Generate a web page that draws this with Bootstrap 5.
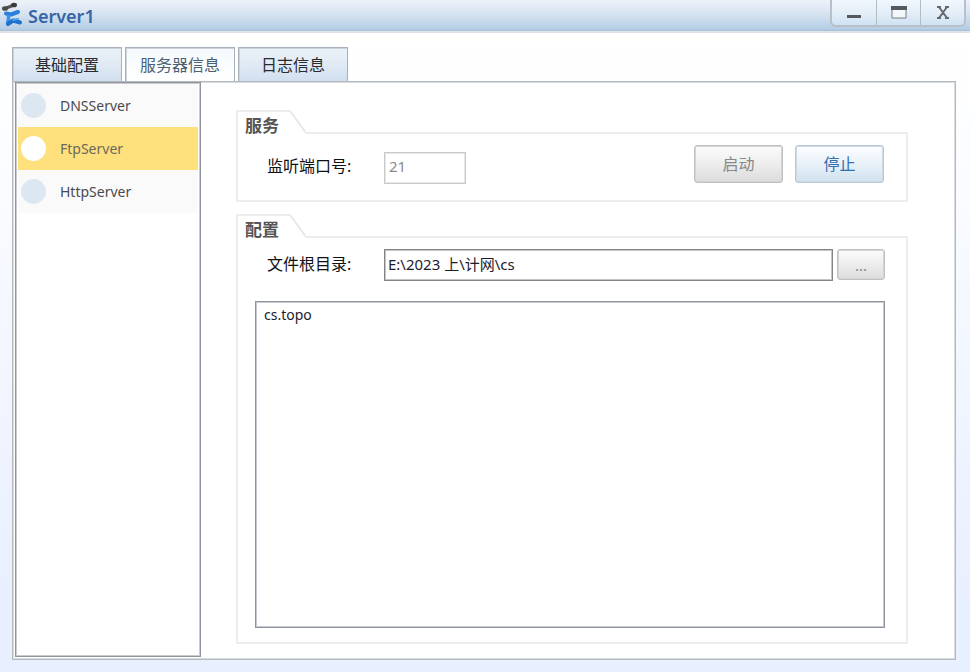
<!DOCTYPE html>
<html lang="zh-CN">
<head>
<meta charset="utf-8">
<meta name="viewport" content="width=device-width, initial-scale=1">
<title>Server1</title>
<link href="https://cdn.jsdelivr.net/npm/bootstrap@5.3.0/dist/css/bootstrap.min.css" rel="stylesheet">
<style>
  body {
    font-family: "Noto Sans", "Noto Sans CJK SC", sans-serif;
    font-size: 16px;
    line-height: 20px;
    color: #111;
    background: linear-gradient(#fff 32px, #fdfeff 110px, #f3f7ff 340px, #e8effe 600px);
  }
  .title-bar {
    height: 33px;
    background: linear-gradient(#eef3fa, #d3e1ef 50%, #b5cee5 29px, #a5bfd7);
    border-bottom: 2px solid #dfe4ea;
  }
  .title-text {
    padding-top: 5px;
    font-size: 18px;
    line-height: 22px;
    font-weight: 600;
    color: #3565a8;
  }
  .window-buttons {
    height: 27px;
    border: 2px solid #b8c0c7;
    border-top: 0;
    border-radius: 0 0 6px 6px;
    background: linear-gradient(#f1f7fd, #e4eef8 50%, #cfe2f3);
  }
  .window-buttons button {
    width: 44px;
    border: 0;
    background: none;
  }
  .window-buttons button + button { border-left: 1px solid #b4bcc3; }
  .page-body { padding: 14px 14px 12px 12px; }
  .tab-row { gap: 3px; }
  .tab-button {
    width: 110px;
    height: 34px;
    border: 1px solid #a9b2bb;
    border-bottom: 0;
    box-shadow: inset 1px 1px #ccd3da;
    color: #282c30;
    background: linear-gradient(#eaf1f8, #e1eaf4 50%, #d0dff0);
  }
  .tab-button.active {
    color: #4a6072;
    background: linear-gradient(#f5fafe, #fff);
  }
  .panel {
    border: 1px solid #b4b9bd;
    box-shadow: inset 0 0 0 1px #d9dcde;
    padding: 0 1px 1px;
  }
  .server-list {
    width: 186px;
    margin: 0 0 1px 1px;
    padding: 1px;
    border: 1px solid #8f949f;
    box-shadow: inset 0 0 0 1px #c9cbd1;
  }
  .server-list button {
    height: 43px;
    margin: 0 1px;
    padding: 0 0 0 3px;
    gap: 14px;
    border: 0;
    font-size: 14px;
    color: #4a4a50;
    background: #fafafa;
  }
  .server-list button.active { background: #fee07d; color: #6a6a5c; }
  .dot {
    width: 25px;
    height: 25px;
    background: #dde7f2;
  }
  .active .dot { background: #fff; }
  .content-area { padding: 28px 46px 14px 35px; }
  .config-section { margin-top: 12px; }
  .group-title {
    width: 54px;
    height: 24px;
    padding: 5px 0 0 7px;
    border: solid #ececec;
    border-width: 2px 0 0 2px;
    font-size: 17px;
    line-height: 18px;
    font-weight: 700;
    color: #555;
  }
  .group-line { border-bottom: 2px solid #ececec; }
  .group-body {
    border: 2px solid #ececec;
    border-top: 0;
  }
  .service-body { padding: 11px 22px 16px 29px; }
  .service-body label { padding-top: 11px; }
  .service-body input { margin-top: 7px; }
  .button-row { gap: 12px; }
  .config-body { padding: 11px 21px 14px 17px; }
  .root-row { padding-left: 12px; margin-bottom: 20px; }
  .root-row label { padding-top: 5px; }
  .field-label { width: 117px; }
  .text-field {
    height: 32px;
    padding: 0 3px 4px;
    border: 1px solid #858585;
    box-shadow: inset 0 0 0 1px #c4c4c4;
    font-size: 15px;
    color: #1c1c2c;
    min-width: 0;
  }
  .port-field {
    width: 82px;
    padding-left: 4px;
    border-color: #cacaca;
    box-shadow: inset 0 0 0 1px #e6e6e6;
    background: #fff;
    color: #8c8c8c;
  }
  .push-button {
    width: 89px;
    height: 38px;
    border: 1px solid #b9c6d3;
    border-radius: 3px;
    box-shadow: inset 0 0 0 1px #cfdae5;
    color: #3470ad;
    background: linear-gradient(#fcfdff, #e8f1f9 50%, #cfe1f0);
  }
  .push-button:disabled {
    border-color: #c0c0c0;
    box-shadow: inset 0 0 0 1px #d4d4d4;
    color: #888;
    background: linear-gradient(#fcfcfc, #ededed 50%, #dcdcdc);
  }
  .browse-button {
    width: 48px;
    height: 31px;
    font-size: 15px;
  }
  .file-list {
    padding: 3px 8px;
    border: 1px solid #8f949f;
    box-shadow: inset 0 0 0 1px #c6c9cf;
    font-size: 14px;
    color: #1c1c2c;
  }
</style>
</head>
<body class="d-flex flex-column min-vh-100">
<header class="title-bar d-flex align-items-start flex-shrink-0">
  <svg class="flex-shrink-0" width="24" height="30" viewBox="0 0 24 30" aria-hidden="true">
    <path d="M5 8.500 14 5" fill="none" stroke="#555" stroke-width="3"/>
    <ellipse cx="5" cy="8.500" rx="3" ry="2.300" fill="#4a4a4c"/>
    <ellipse cx="14" cy="5" rx="3" ry="2.300" fill="#3c3c3e"/>
    <path d="M6 13.500 11 14.500 18 12" fill="none" stroke="#2a80dc" stroke-width="4" stroke-linecap="round" stroke-linejoin="round"/>
    <path d="M8.500 15v4l-1 4.500" fill="none" stroke="#3a92ea" stroke-width="3.500"/>
    <path d="M8 24 13 20.500 20 22.500" fill="none" stroke="#1f70cc" stroke-width="4" stroke-linecap="round" stroke-linejoin="round"/>
    <path d="M13 20l5-1" fill="none" stroke="#4a9cf0" stroke-width="2" stroke-linecap="round"/>
  </svg>
  <h1 class="title-text m-0 ms-1 flex-fill">Server1</h1>
  <div class="window-buttons d-flex me-1">
    <button type="button" aria-label="Minimize" class="p-0 d-flex justify-content-center"><svg width="14" height="24" aria-hidden="true"><path d="M0 15h14v3H0z" fill="#55585d"/></svg></button>
    <button type="button" aria-label="Maximize" class="p-0 d-flex justify-content-center"><svg width="16" height="24" aria-hidden="true"><path d="M1 7h14v11H1z" fill="#f5f8fb" stroke="#777a7f"/><path d="M0 6h16v4H0z" fill="#55585d"/></svg></button>
    <button type="button" aria-label="Close" class="p-0 d-flex justify-content-center"><svg width="12" height="24" aria-hidden="true"><path d="M0 7h4M8 7h4M0 18h4M8 18h4M2 7l8 11M10 7l-8 11" fill="none" stroke="#66696e" stroke-width="2"/></svg></button>
  </div>
</header>

<main class="page-body d-flex flex-column flex-fill">
  <div class="tab-row d-flex" role="tablist">
    <button type="button" class="tab-button p-0" role="tab" aria-selected="false">基础配置</button>
    <button type="button" class="tab-button active p-0" role="tab" aria-selected="true">服务器信息</button>
    <button type="button" class="tab-button p-0" role="tab" aria-selected="false">日志信息</button>
  </div>

  <div class="panel d-flex flex-fill bg-white">
    <nav class="server-list flex-shrink-0 d-flex flex-column" aria-label="Servers">
      <button type="button" class="d-flex align-items-center text-start"><span class="dot rounded-circle"></span><span>DNSServer</span></button>
      <button type="button" class="active d-flex align-items-center text-start"><span class="dot rounded-circle"></span><span>FtpServer</span></button>
      <button type="button" class="d-flex align-items-center text-start"><span class="dot rounded-circle"></span><span>HttpServer</span></button>
    </nav>

    <div class="content-area d-flex flex-column flex-fill">
      <section>
        <div class="d-flex">
          <h2 class="group-title m-0 text-nowrap">服务</h2>
          <svg class="flex-shrink-0" width="16" height="24" aria-hidden="true"><path d="M0 1 16 23" fill="none" stroke="#e8e8e8" stroke-width="2"/></svg>
          <div class="group-line flex-fill"></div>
        </div>
        <div class="group-body service-body d-flex align-items-start">
          <label class="field-label" for="port">监听端口号:</label>
          <input class="text-field port-field" id="port" type="text" value="21" disabled>
          <div class="button-row d-flex ms-auto">
            <button type="button" class="push-button p-0" disabled>启动</button>
            <button type="button" class="push-button p-0">停止</button>
          </div>
        </div>
      </section>

      <section class="config-section d-flex flex-column flex-fill">
        <div class="d-flex">
          <h2 class="group-title m-0 text-nowrap">配置</h2>
          <svg class="flex-shrink-0" width="16" height="24" aria-hidden="true"><path d="M0 1 16 23" fill="none" stroke="#e8e8e8" stroke-width="2"/></svg>
          <div class="group-line flex-fill"></div>
        </div>
        <div class="group-body config-body d-flex flex-column flex-fill">
          <div class="root-row d-flex">
            <label class="field-label flex-shrink-0" for="root">文件根目录:</label>
            <input class="text-field flex-fill" id="root" type="text" value="E:\2023 上\计网\cs">
            <button type="button" class="push-button browse-button p-0 ms-1" disabled>...</button>
          </div>
          <ul class="file-list list-unstyled flex-fill mb-0">
            <li>cs.topo</li>
          </ul>
        </div>
      </section>
    </div>
  </div>
</main>
<script src="https://cdn.jsdelivr.net/npm/bootstrap@5.3.0/dist/js/bootstrap.bundle.min.js"></script>
</body>
</html>
